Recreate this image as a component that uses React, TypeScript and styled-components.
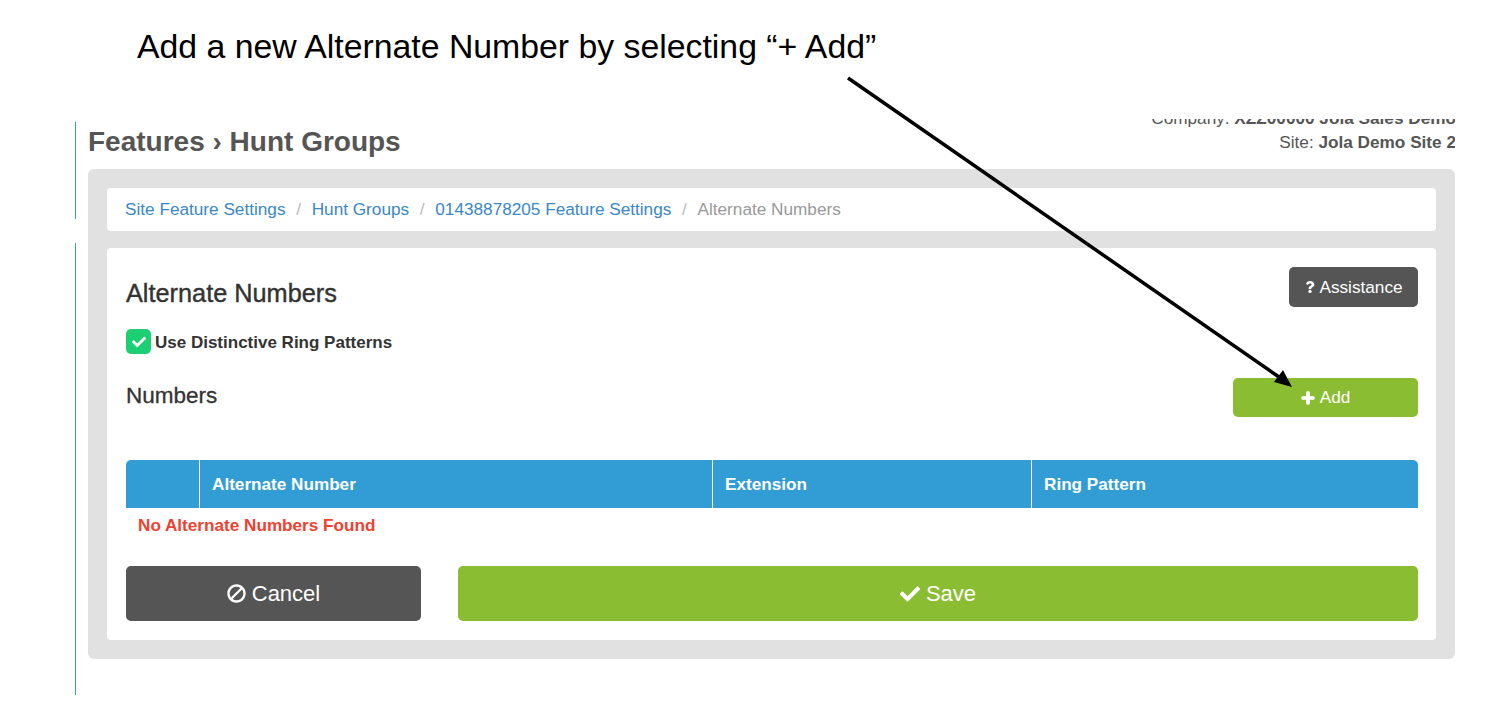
import React from 'react';
import styled, { createGlobalStyle } from 'styled-components';
import { FaBan, FaCheck, FaPlus, FaQuestion } from 'react-icons/fa';

const GlobalStyle = createGlobalStyle`
  html, body {
    margin: 0;
    padding: 0;
    background: #fff;
    font-family: 'Liberation Sans', Arial, sans-serif;
  }
  * {
    box-sizing: border-box;
  }
`;

const Page = styled.div`
  position: relative;
  width: 1505px;
  height: 708px;
  overflow: hidden;
  background: #fff;
`;

const Caption = styled.div`
  height: 119px;
  padding: 26px 0 0 137px;
  font-size: 33.8px;
  line-height: 40px;
  color: #000;
`;

const Shot = styled.div`
  display: flex;
  padding-left: 75px;
`;

const Rail = styled.div`
  display: flex;
  flex-direction: column;
  gap: 24px;
  width: 13px;
  padding-top: 3px;
  flex: none;
`;

const RailLine = styled.div<{ $height: number }>`
  width: 1px;
  height: ${(p) => p.$height}px;
  background: #3c9ad6;
`;

const Content = styled.div`
  width: 1367px;
  flex: none;
`;

const Header = styled.div`
  display: flex;
  justify-content: space-between;
  height: 50px;
  overflow: hidden;
`;

const Title = styled.h1`
  margin: 3px 0 0;
  font-size: 28px;
  line-height: 40px;
  font-weight: 700;
  color: #555;
`;

const SiteInfo = styled.div`
  margin: -12px -1px 0 0;
  text-align: right;
  font-size: 17.2px;
  line-height: 23.5px;
  color: #555;
  b {
    font-weight: 700;
  }
`;

const Panel = styled.div`
  display: flex;
  flex-direction: column;
  gap: 17px;
  height: 490px;
  padding: 19px;
  background: #e1e1e1;
  border-radius: 6px;
`;

const Breadcrumb = styled.div`
  display: flex;
  align-items: center;
  height: 43px;
  padding: 0 18px;
  background: #fff;
  border-radius: 4px;
  font-size: 17.2px;
  color: #999;
`;

const CrumbLink = styled.span`
  color: #3a87c8;
`;

const CrumbSep = styled.span`
  padding: 0 10.7px;
  color: #bbb;
`;

const Card = styled.div`
  height: 392px;
  padding: 19px 18px 19px 19px;
  background: #fff;
  border-radius: 4px;
  color: #333;
`;

const TopRow = styled.div`
  display: flex;
  justify-content: space-between;
  align-items: flex-start;
  height: 62px;
`;

const CardTitle = styled.h2`
  margin: 8px 0 0;
  font-size: 25.3px;
  line-height: 36px;
  font-weight: 400;
  -webkit-text-stroke: 0.4px #333;
  color: #333;
`;

const Button = styled.button<{ $tone: 'dark' | 'green' }>`
  display: flex;
  align-items: center;
  justify-content: center;
  border: 0;
  padding: 0;
  color: #fff;
  font-family: inherit;
  background: ${(p) => (p.$tone === 'dark' ? '#555555' : '#8bbd32')};
  border-radius: 5px;
`;

const SmallButton = styled(Button)<{ $width: number; $height: number }>`
  width: ${(p) => p.$width}px;
  height: ${(p) => p.$height}px;
  gap: 3px;
  font-size: 17.2px;
`;

const BigButton = styled(Button)`
  height: 55px;
  gap: 6px;
  font-size: 22px;
`;

const CheckRow = styled.label`
  display: flex;
  align-items: center;
  gap: 4px;
  height: 25px;
  font-size: 17px;
  font-weight: 700;
`;

const CheckBox = styled.span`
  display: flex;
  align-items: center;
  justify-content: center;
  width: 25px;
  height: 25px;
  background: #1ccf72;
  border-radius: 5px;
  color: #fff;
  font-size: 14px;
`;

const CheckText = styled.span`
  margin-top: 2px;
`;

const NumbersRow = styled.div`
  display: flex;
  justify-content: space-between;
  align-items: flex-start;
  height: 82px;
  margin-top: 24px;
`;

const NumbersTitle = styled.h3`
  margin: 3px 0 0;
  font-size: 22.5px;
  line-height: 30px;
  font-weight: 400;
  -webkit-text-stroke: 0.3px #333;
`;

const Table = styled.table`
  width: 100%;
  border-collapse: separate;
  border-spacing: 0;
  table-layout: fixed;
`;

const Th = styled.th<{ $width?: number }>`
  width: ${(p) => (p.$width ? `${p.$width}px` : 'auto')};
  height: 48px;
  padding: 0 12px;
  background: #329dd5;
  color: #fff;
  font-size: 17.15px;
  font-weight: 700;
  text-align: left;
  border-left: 1px solid #fff;
  &:first-child {
    border-left: 0;
    border-top-left-radius: 5px;
  }
  &:last-child {
    border-top-right-radius: 5px;
  }
`;

const EmptyCell = styled.td`
  height: 35px;
  padding: 0 12px;
  color: #ef4130;
  font-size: 17.15px;
  font-weight: 700;
`;

const Actions = styled.div`
  display: grid;
  grid-template-columns: 295px 1fr;
  gap: 37px;
  margin-top: 23px;
`;

const BanIcon = styled(FaBan)`
  transform: scaleX(-1);
`;

const PlusIcon = styled(FaPlus)`
  margin-right: 2px;
  stroke: currentColor;
  stroke-width: 40px;
`;

const ArrowLayer = styled.svg`
  position: absolute;
  inset: 0;
  pointer-events: none;
`;

export default function App() {
  return (
    <Page>
      <GlobalStyle />
      <Caption>Add a new Alternate Number by selecting “+ Add”</Caption>
      <Shot>
        <Rail>
          <RailLine $height={97} />
          <RailLine $height={452} />
        </Rail>
        <Content>
          <Header>
            <Title>Features › Hunt Groups</Title>
            <SiteInfo>
              <div>
                Company: <b>XZZ00000 Jola Sales Demo</b>
              </div>
              <div>
                Site: <b>Jola Demo Site 2</b>
              </div>
            </SiteInfo>
          </Header>
          <Panel>
            <Breadcrumb>
              <CrumbLink>Site Feature Settings</CrumbLink>
              <CrumbSep>/</CrumbSep>
              <CrumbLink>Hunt Groups</CrumbLink>
              <CrumbSep>/</CrumbSep>
              <CrumbLink>01438878205 Feature Settings</CrumbLink>
              <CrumbSep>/</CrumbSep>
              <span>Alternate Numbers</span>
            </Breadcrumb>
            <Card>
              <TopRow>
                <CardTitle>Alternate Numbers</CardTitle>
                <SmallButton $tone="dark" $width={129} $height={40}>
                  <FaQuestion size={12} />
                  Assistance
                </SmallButton>
              </TopRow>
              <CheckRow>
                <CheckBox>
                  <FaCheck />
                </CheckBox>
                <CheckText>Use Distinctive Ring Patterns</CheckText>
              </CheckRow>
              <NumbersRow>
                <NumbersTitle>Numbers</NumbersTitle>
                <SmallButton $tone="green" $width={185} $height={39}>
                  <PlusIcon size={14} />
                  Add
                </SmallButton>
              </NumbersRow>
              <Table>
                <thead>
                  <tr>
                    <Th $width={73} />
                    <Th $width={513}>Alternate Number</Th>
                    <Th $width={319}>Extension</Th>
                    <Th>Ring Pattern</Th>
                  </tr>
                </thead>
                <tbody>
                  <tr>
                    <EmptyCell colSpan={4}>No Alternate Numbers Found</EmptyCell>
                  </tr>
                </tbody>
              </Table>
              <Actions>
                <BigButton $tone="dark">
                  <BanIcon size={19} />
                  Cancel
                </BigButton>
                <BigButton $tone="green">
                  <FaCheck size={20} />
                  Save
                </BigButton>
              </Actions>
            </Card>
          </Panel>
        </Content>
      </Shot>
      <ArrowLayer width={1505} height={708} viewBox="0 0 1505 708">
        <line x1={848} y1={78} x2={1279} y2={377} stroke="#000" strokeWidth={3.5} />
        <polygon points="1292,387 1274,382 1283,370" fill="#000" />
      </ArrowLayer>
    </Page>
  );
}
